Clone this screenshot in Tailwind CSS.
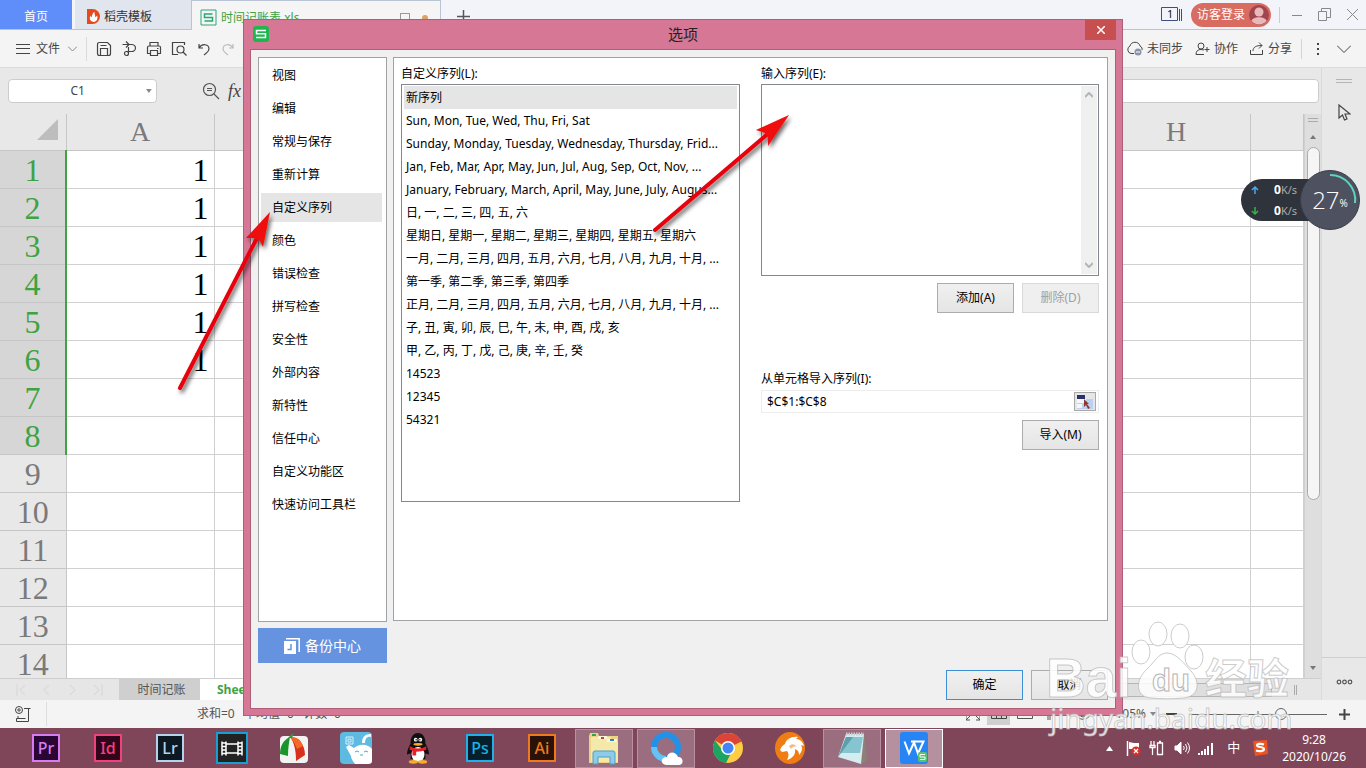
<!DOCTYPE html>
<html lang="zh-CN">
<head>
<meta charset="utf-8">
<title>选项</title>
<script src="https://cdn.jsdelivr.net/npm/@tailwindcss/browser@4"></script>
</head>
<body class="relative flex h-screen flex-col overflow-hidden bg-[#e8e8e8] font-['Noto_Sans','Noto_Sans_CJK_SC',sans-serif] text-xs text-[#444]">

<!-- Window tabs -->
<header class="flex h-[30px] shrink-0 items-stretch border-b border-[#b9c4d4] bg-[#f2f4f9]">
  <button class="w-[72px] bg-[#5f8dfa] pt-1 text-white">首页</button>
  <button class="ml-[3px] flex w-[116px] items-center gap-1 bg-[#e1e5ee] pl-3 pt-1 text-[#333]">
    <svg width="13" height="15" viewBox="0 0 14 16"><path d="M0 0h6a8 8 0 0 1 0 16H0z" fill="#e8481c"/><path d="M7 14c-4-1-5-4-3-7 0 2 1 2 1 2 0-3 2-5 3-6 0 3 1 4 1 6l2-2c1 4-1 7-4 7z" fill="#fff"/></svg>
    稻壳模板</button>
  <button class="-mb-px flex w-[250px] items-center gap-1 border border-b-0 border-[#b9c4d4] bg-[#f5f5f5] pl-2 pt-1 text-[#3fa243]">
    <svg width="17" height="17" viewBox="0 0 17 17" fill="none" stroke="#2aa775"><path d="M1 1h15v15H1z"/><path d="M12.500 5h-8v3.500h8V12h-8" stroke-width="1.500"/></svg>
    <span>时间记账表.xls</span>
    <span class="ml-auto size-[10px] border border-[#999]"></span><span class="mr-3 ml-2 size-[6px] rounded-full bg-[#e0a068]"></span>
  </button>
  <button class="ml-4 w-4 pt-1" aria-label="新建"><svg width="13" height="13" viewBox="0 0 13 13" stroke="#555" stroke-width="1.500"><path d="M6.500 0v13M0 6.500h13"/></svg></button>
  <div class="ml-auto flex items-center">
    <svg width="22" height="15" viewBox="0 0 22 15" fill="none" stroke="#3d4f7c"><path d="M.5.5h16v13H.5zM18.500 2v12M20.500 2v12"/><text x="6" y="11" font-size="11" fill="#111" stroke="none">1</text></svg>
    <button class="ml-2 flex h-6 w-20 items-center justify-between rounded-full bg-[#d96b61] pr-[2px] pl-[6px] text-white">访客登录
      <svg width="20" height="20" viewBox="0 0 20 20"><circle cx="10" cy="10" r="10" fill="#a04550"/><circle cx="10" cy="7" r="4.500" fill="#e9b9ba"/><path d="M2.500 16c1-5 14-5 15 0a10 10 0 0 1-15 0z" fill="#e9b9ba"/></svg></button>
    <span class="ml-2 h-4 w-px bg-[#ccc]"></span>
    <button class="ml-3" aria-label="最小化"><svg width="10" height="12" viewBox="0 0 10 12" stroke="#888"><path d="M0 6.500h10"/></svg></button>
    <button class="ml-4" aria-label="还原"><svg width="13" height="13" viewBox="0 0 13 13" fill="none" stroke="#888"><path d="M.5 3.500h8v9h-8zM3.500 3.500v-3h9v9h-4"/></svg></button>
    <button class="mr-2 ml-4" aria-label="关闭"><svg width="11" height="11" viewBox="0 0 11 11" stroke="#888"><path d="M0 0l11 11M11 0L0 11"/></svg></button>
  </div>
</header>

<!-- Quick access bar -->
<nav class="flex h-[38px] shrink-0 items-center border-b border-[#dcdcdc] bg-[#f4f4f4] pl-4">
  <button class="flex items-center gap-[6px]"><svg width="14" height="10" viewBox="0 0 14 10" stroke="#444"><path d="M0 .5h14M0 4.500h14M0 9.500h14"/></svg>文件<svg class="ml-[2px]" width="9" height="6" viewBox="0 0 9 6" fill="none" stroke="#888"><path d="M0 .5l4.500 4.500L9 .5"/></svg></button>
  <span class="ml-[9px] h-6 w-px bg-[#dadada]"></span>
  <div class="ml-[9px] flex items-center gap-[9px] text-[#444]">
    <button aria-label="保存"><svg width="16" height="16" viewBox="0 0 16 16" fill="none" stroke="currentColor" stroke-width="1.200"><path d="M1.500 3.500q0-2 2-2h8l3 3v8q0 2-2 2h-9q-2 0-2-2zM4.500 14V7.500h7V14M4.500 4.500h6"/></svg></button>
    <button aria-label="输出"><svg width="16" height="16" viewBox="0 0 16 16" fill="none" stroke="currentColor" stroke-width="1.200"><path d="M1.500 3.500h9a4 3.500 0 0 1 0 7H5M5 .5l3 3-3 3M7.500 6v6"/><circle cx="5.500" cy="12.500" r="2"/></svg></button>
    <button aria-label="打印"><svg width="16" height="16" viewBox="0 0 16 16" fill="none" stroke="currentColor" stroke-width="1.200"><path d="M4 5V1.500h8V5M4 12.500H1.500v-6q0-1.500 1.500-1.500h10q1.500 0 1.500 1.500v6H12M4.500 9.500h7v5h-7zM11 7.500h1.500"/></svg></button>
    <button aria-label="预览"><svg width="16" height="16" viewBox="0 0 16 16" fill="none" stroke="currentColor" stroke-width="1.200"><path d="M7 13.500H1.500v-12h12V4"/><circle cx="9.500" cy="8.500" r="3.500"/><path d="M12 11l3.500 3.500"/></svg></button>
    <button aria-label="撤销"><svg width="16" height="16" viewBox="0 0 16 16" fill="none" stroke="currentColor" stroke-width="1.200"><path d="M3 3v4h4M3 7c3-5 10-4 10 1 0 3-3 4-5 6"/></svg></button>
    <button aria-label="恢复" class="text-[#bbb]"><svg width="16" height="16" viewBox="0 0 16 16" fill="none" stroke="currentColor" stroke-width="1.200"><path d="M12 3v4H8M12 7C9 2 2 3 2 8c0 3 3 4 5 6"/></svg></button>
  </div>
  <div class="ml-auto flex items-center">
    <button class="flex items-center gap-1"><svg width="17" height="15" viewBox="0 0 17 15" fill="none" stroke="#444"><path d="M8 12.500H5a4 4 0 0 1-1-7.500c1-5 9-5 10 0 2 1 2.500 3 2 4"/><circle cx="12" cy="11" r="3.500" fill="#8a94a8" stroke="none"/><path d="M10 11h4" stroke="#fff"/></svg>未同步</button>
    <button class="ml-3 flex items-center gap-1"><svg width="15" height="14" viewBox="0 0 15 14" fill="none" stroke="#444"><circle cx="6" cy="4" r="3"/><path d="M9 12.500H1q0-5 5-5l3 .5M12 5v5M9.500 7.500h5"/></svg>协作</button>
    <button class="ml-[11px] flex items-center gap-1"><svg width="15" height="14" viewBox="0 0 15 14" fill="none" stroke="#444"><path d="M1.500 8v4.500h12V8M4 9c0-4 3-5.500 9-5.500M10 .5l3 3-3 3"/></svg>分享</button>
    <span class="ml-[9px] h-5 w-px bg-[#d5d5d5]"></span>
    <button class="ml-[15px]" aria-label="更多"><svg width="3" height="14" viewBox="0 0 3 14" fill="#444"><path d="M0 1h2v2H0zM0 6h2v2H0zM0 11h2v2H0z"/></svg></button>
    <button class="mr-[15px] ml-[17px]" aria-label="折叠"><svg width="14" height="8" viewBox="0 0 14 8" fill="none" stroke="#444"><path d="M0 .5l7 7 7-7"/></svg></button>
  </div>
</nav>

<main class="flex min-h-0 flex-1">
  <section class="flex min-w-0 flex-1 flex-col">
    <div class="flex h-[46px] shrink-0 items-center pr-[2px] pl-2">
      <div class="flex h-6 w-[149px] items-center rounded-sm border border-[#ccc] bg-white pr-1">
        <input aria-label="名称框" value="C1" class="w-full min-w-0 text-center text-xs text-[#444]">
        <svg width="6" height="4" viewBox="0 0 6 4" fill="#888"><path d="M0 0h6L3 4z"/></svg>
      </div>
      <svg class="ml-[45px]" width="18" height="18" viewBox="0 0 18 18" fill="none" stroke="#555" stroke-width="1.200"><circle cx="7.500" cy="7.500" r="6"/><path d="M12 12l5 5M5 6.500h5M5 8.500h5"/></svg>
      <span class="ml-2 font-['Liberation_Serif',serif] text-lg italic">fx</span>
      <input aria-label="编辑栏" class="ml-2 h-6 min-w-0 flex-1 rounded-sm border border-[#ccc] bg-white px-1">
    </div>
    <div class="flex min-h-0 flex-1">
      <div class="min-w-0 flex-1 overflow-hidden bg-white">
        <table class="w-full table-fixed border-collapse font-['Liberation_Serif',serif] text-[32px] leading-8 text-[#7a7a7a]">
          <colgroup><col class="w-[66px]"><col class="w-[148px]"><col class="w-[148px]"><col class="w-[148px]"><col class="w-[148px]"><col class="w-[148px]"><col class="w-[148px]"><col class="w-[148px]"><col class="w-[148px]"><col></colgroup>
          <thead><tr class="h-[36px] bg-[#e8e8e8] text-[28px] *:border-r *:border-b *:border-[#c6c6c6] *:p-0 *:font-normal">
            <th><svg class="mb-1 ml-auto mr-2 block" width="21" height="21" viewBox="0 0 21 21"><path d="M21 0v21H0z" fill="#bdbdbd"/></svg></th><th>A</th><th></th><th></th><th></th><th></th><th></th><th></th><th>H</th><th></th></tr></thead>
          <tbody id="rows"></tbody>
        </table>
      </div>
      <div class="flex w-[17px] shrink-0 flex-col items-center border-l border-[#d0d0d0] bg-[#dedede]">
        <span class="mt-1 h-1 w-[10px] border-y border-[#aaa]"></span>
        <svg class="mt-[13px]" width="6" height="4" viewBox="0 0 6 4" fill="#777"><path d="M3 0l3 4H0z"/></svg>
        <span class="mt-2 h-[353px] w-[13px] rounded-full border border-[#aaa] bg-[#f5f5f5]"></span>
        <svg class="mt-auto mb-2" width="6" height="4" viewBox="0 0 6 4" fill="#777"><path d="M3 4l3-4H0z"/></svg>
      </div>
    </div>
    <div class="flex h-[22px] shrink-0 items-center border-t border-[#cfcfcf] bg-[#e6e6e6]">
      <svg class="ml-4" width="87" height="12" viewBox="0 0 87 12" fill="none" stroke="#dcdcdc" stroke-width="1.500"><path d="M1 0v12M9 1L4 6l5 5M33 1l-5 5 5 5M54 1l5 5-5 5M78 1l5 5-5 5M86 0v12"/></svg>
      <button class="ml-4 h-full w-[81px] bg-[#cfcfcf] pl-1 text-[#555]">时间记账</button>
      <button class="h-full w-20 bg-white text-left pl-[17px] font-['Open_Sans','Noto_Sans',sans-serif] font-bold text-[#3fa243]">Sheet1</button>
      <span class="mr-[22px] ml-auto h-[14px] w-[400px] border border-[#b5b5b5] bg-[#dedede]"></span>
      <span class="mr-6 h-[10px] w-[3px] border-x border-[#aaa]"></span>
    </div>
  </section>
  <aside class="flex w-[45px] shrink-0 flex-col items-center border-l border-[#dadada] bg-[#e8e8e8]">
    <span class="mt-[11px] h-1 w-4 border-y border-[#b5b5b5]"></span>
    <svg class="mt-[21px]" width="13" height="17" viewBox="0 0 13 17" fill="none" stroke="#444" stroke-width="1.200"><path d="M1 1v13l3.500-3 2 5 2.500-1-2-5H12z"/></svg>
    <span class="mt-auto h-px w-full bg-[#cfcfcf]"></span>
    <svg class="mt-[21px] mb-[15px]" width="17" height="6" viewBox="0 0 17 6" fill="none" stroke="#555" stroke-width="1.200"><circle cx="3" cy="3" r="1.800"/><circle cx="8.500" cy="3" r="1.800"/><circle cx="14" cy="3" r="1.800"/></svg>
  </aside>
</main>

<!-- Status bar -->
<footer class="flex h-7 shrink-0 items-center bg-[#f4f4f4] pl-[15px]">
  <svg width="16" height="16" viewBox="0 0 16 16" fill="none" stroke="#444"><circle cx="4" cy="4" r="3.500"/><circle cx="4" cy="4" r="1.200"/><path d="M9 2.500h6.500M13.500 2.500v13h-12v-3h9M3 10v2"/></svg>
  <span class="ml-[15px] h-6 w-px bg-[#ddd]"></span>
  <span class="ml-[150px] whitespace-pre text-[#555]">求和=0   平均值=0   计数=0</span>
  <div class="ml-auto flex items-center text-[#555]">
    <svg width="14" height="14" viewBox="0 0 14 14" fill="none" stroke="#555"><path d="M0 9v4h4M0 13l5-5M14 9v4h-4M14 13L9 8M0 4V0h4M0 0l5 5M14 4V0h-4M14 0L9 5"/></svg>
    <span class="ml-[7px] flex h-[22px] w-[23px] items-center justify-center bg-[#cfcfcf]"><svg width="16" height="12" viewBox="0 0 16 12" fill="none" stroke="#444"><path d="M.5.5h15v10H.5zM0 5.500h16M5.500 0v11M10.500 0v11"/></svg></span>
    <svg class="ml-[7px]" width="16" height="12" viewBox="0 0 16 12" fill="none" stroke="#555"><path d="M.5.5h15v10H.5z"/></svg>
    <svg class="ml-[10px]" width="14" height="14" viewBox="0 0 14 14" fill="none" stroke="#555"><path d="M1 3.500h12v5H1zM7 0v13M5 8v5"/></svg>
    <svg class="ml-[18px]" width="16" height="14" viewBox="0 0 16 14" fill="none" stroke="#555"><path d="M0 7c4-7 12-7 16 0-4 7-12 7-16 0z"/><circle cx="8" cy="7" r="3"/></svg>
    <span class="ml-6">105%</span>
    <svg class="ml-1" width="6" height="4" viewBox="0 0 6 4" fill="#888"><path d="M0 0h6L3 4z"/></svg>
    <svg class="ml-[10px]" width="11" height="12" viewBox="0 0 11 12" stroke="#444" stroke-width="2"><path d="M0 6h11"/></svg>
    <svg class="ml-[12px]" width="138" height="14" viewBox="0 0 138 14" fill="#f4f4f4" stroke="#666"><path d="M0 7.500h138M69 4v6"/><circle cx="92" cy="7" r="5.500"/></svg>
    <svg class="mr-4 ml-3" width="11" height="11" viewBox="0 0 11 11" stroke="#444" stroke-width="2"><path d="M5.500 0v11M0 5.500h11"/></svg>
  </div>
</footer>

<!-- Taskbar -->
<nav class="flex h-10 shrink-0 items-center bg-[#7f4558] pl-[17px]">
  <div class="flex gap-1 *:flex *:h-[39px] *:w-[58px] *:items-center *:justify-center">
    <button><span class="flex size-7 items-center justify-center border-2 border-[#d77bf0] bg-[#2a0634] text-base leading-none font-medium text-[#d77bf0]">Pr</span></button>
    <button><span class="flex size-7 items-center justify-center border-2 border-[#f0417f] bg-[#30051c] text-base leading-none font-medium text-[#f0417f]">Id</span></button>
    <button><span class="flex size-7 items-center justify-center border-2 border-[#b4d2ea] bg-[#0c1822] text-base leading-none font-medium text-[#b4d2ea]">Lr</span></button>
    <button aria-label="视频"><svg width="32" height="32" viewBox="0 0 32 32"><path d="M1 1h30v30H1z" fill="#222" stroke="#17a0cf" stroke-width="2"/><path d="M6 9.500v14M10 9.500v14M22 9.500v14M26 9.500v14" stroke="#fff" stroke-width="1.500"/><path d="M6 11h4M6 14.500h4M6 18h4M6 21.500h4M22 11h4M22 14.500h4M22 18h4M22 21.500h4M10 12h12M10 21h12" stroke="#fff" stroke-width="1.500"/></svg></button>
    <button aria-label="录屏"><svg width="32" height="32" viewBox="0 0 32 32"><rect x="2" y="4" width="28" height="27" rx="4" fill="#f3f3f3"/><path d="M12 5C5 8 2 15 2 22l8 2c0-8 1-14 2-19z" fill="#19952a"/><path d="M12 5c8 0 15 7 15 18l-9 6C18 18 16 10 12 5z" fill="#d9301c"/><path d="M12 5c8 0 11 3 13 9l-6 3c-2-5-4-9-7-12z" fill="#f36a28"/><path d="M10 6q3-4 6-5l-2 5z" fill="#2d9c35"/></svg></button>
    <button aria-label="助手"><svg width="32" height="32" viewBox="0 0 32 32"><rect width="32" height="32" rx="4" fill="#5dbbe2"/><path d="M6 15l3-2 5 3c4-4 13-5 18 1v12q0 3-4 3H15c-2-3-4-5-4-8z" fill="#fff"/><path d="M22 11c0-6 3-9 9-9v3c-4-1-6 2-6 6z" fill="#fff"/><path d="M15 20q2-2 4 0M24 20q2-2 4 0M20 23h3" stroke="#4aa6ce" fill="none"/><path d="M6 5h7v7H6zM8 7h3v3H8z" fill="none" stroke="#d8f1fb"/></svg></button>
    <button aria-label="QQ"><svg width="24" height="32" viewBox="0 0 26 34"><path d="M5 12C4-3 22-3 21 12c2 3 4 8 4 12l-4-1v6H5v-6l-4 1c0-4 2-9 4-12z" fill="#111"/><ellipse cx="13" cy="24" rx="7" ry="8" fill="#fff"/><circle cx="10.500" cy="8" r="2" fill="#fff"/><circle cx="15.500" cy="8" r="2" fill="#fff"/><circle cx="11" cy="8" r=".8"/><circle cx="15" cy="8" r=".8"/><ellipse cx="13" cy="13" rx="5" ry="1.500" fill="#f6ad2b"/><path d="M4 15q9 5 18 0v4q-5 2-11 2v4H7v-5l-3-1z" fill="#e4202c"/><ellipse cx="8" cy="32" rx="5" ry="2" fill="#f6ad2b"/><ellipse cx="18" cy="32" rx="5" ry="2" fill="#f6ad2b"/></svg></button>
    <button><span class="flex size-7 items-center justify-center border-2 border-[#1fb0e8] bg-[#05202c] text-base leading-none font-medium text-[#1fb0e8]">Ps</span></button>
    <button><span class="flex size-7 items-center justify-center border-2 border-[#ef7a1c] bg-[#2a1306] text-base leading-none font-medium text-[#ef7a1c]">Ai</span></button>
    <button class="border border-[#b990a0] bg-[#9a6e7e]" aria-label="资源管理器"><svg width="32" height="34" viewBox="0 0 32 34"><path d="M1 5l1-3h8l1 3h19v27H1z" fill="#e9d583"/><path d="M3 6h20v5h7v20H3z" fill="#f4e9a9"/><path d="M10 5h9v3h-9zM19 8h10v3H19z" fill="#fbf7d8"/><path d="M4 3h4v2H4z" fill="#2ba84a"/><path d="M13 6h3v2h-3z" fill="#d0422c"/><path d="M22 8h4v2h-4z" fill="#2c83d0"/><path d="M5 33V22q0-2 2-2h18q2 0 2 2v11h-5v-7H10v7z" fill="#8ccbe9" stroke="#4f9ec7"/></svg></button>
    <button class="border border-[#b990a0] bg-[#9a6e7e]" aria-label="QQ浏览器"><svg width="34" height="34" viewBox="0 0 34 34"><circle cx="17" cy="16" r="12" fill="none" stroke="#2491e8" stroke-width="6"/><path d="M5 16a12 12 0 0 0 12 12" fill="none" stroke="#65c2f4" stroke-width="6"/><path d="M18 34c-7 0-7-8 0-8 1-6 9-6 11 0 6 0 6 8 1 8z" fill="#fff"/></svg></button>
    <button aria-label="Chrome"><svg width="30" height="34" viewBox="0 0 30 34"><circle cx="15" cy="17" r="15" fill="#fc4"/><path d="M15 17L2 9.500a15 15 0 0 1 26.500 1z" fill="#db4437"/><path d="M2 9.500A15 15 0 0 0 13 32l6-12-9 0z" fill="#1da462"/><circle cx="15" cy="17" r="7" fill="#fff"/><circle cx="15" cy="17" r="5.500" fill="#4285f4"/></svg></button>
    <button aria-label="UC浏览器"><svg width="30" height="34" viewBox="0 0 30 34"><ellipse cx="15" cy="17" rx="15" ry="16" fill="#f07d14"/><path d="M5 19c1-3 3-5 5-6 1-5 7-8 13-7l-2 2c4 0 7 3 8 7l-3-1c2 3 1 7-2 10 0-3-1-5-4-6 1 5-2 9-8 11 2-4 2-7 0-9l-5 1z" fill="#fff"/><path d="M14 15c3-3 6-2 8 1-3-1-5 0-6 2z" fill="#f7b981"/></svg></button>
    <button class="border border-[#b990a0] bg-[#9a6e7e]" aria-label="记事本"><svg width="32" height="34" viewBox="0 0 32 34"><path d="M10 3h18l3 26-5 4z" fill="#8b8275"/><path d="M10 3h18l-3 30L2 26z" fill="#d5edf0"/><path d="M10 6h17l-3 16H4z" fill="#86c4cf"/><path d="M2 26l15-20h-7z" fill="#5c9eab"/><path d="M10 3h18" stroke="#ccc" stroke-width="3" stroke-dasharray="1.500 1"/></svg></button>
    <button class="border border-white bg-[#b591a0]" aria-label="WPS"><svg width="28" height="34" viewBox="0 0 28 34"><rect y="1" width="28" height="32" rx="3" fill="#2684f4"/><path d="M4.500 10.500l4.500 12 5-11 4 11 5.500-12H11" fill="none" stroke="#fff" stroke-width="2"/><rect x="18" y="21" width="9" height="10" rx="2" fill="#57c271"/><path d="M25 23.500h-5V26h5v2.500h-5" fill="none" stroke="#fff"/></svg></button>
  </div>
  <div class="ml-auto flex items-center text-white">
    <svg width="7" height="5" viewBox="0 0 7 5" fill="#fff"><path d="M3.500 0L7 5H0z"/></svg>
    <svg class="ml-[13px]" width="15" height="16" viewBox="0 0 15 16"><path d="M1.500 1v15" stroke="#fff" stroke-width="1.500"/><path d="M3 2l5 1 5 0v6H3z" fill="#fff"/><circle cx="10" cy="11" r="4.500" fill="#d6302a"/><path d="M8 9l4 4M12 9l-4 4" stroke="#fff" stroke-width="1.300"/></svg>
    <svg class="ml-2" width="16" height="16" viewBox="0 0 16 16" fill="none" stroke="#fff" stroke-width="1.300"><path d="M2 1v4M5 1v4M1 5.500h5v2H1zM3.500 8v7M8.500 3h5v11.500h-5zM10 1.500h2"/></svg>
    <svg class="ml-[9px]" width="16" height="14" viewBox="0 0 16 14" fill="none" stroke="#fff"><path d="M1 5h2l4-4v12L3 9H1z" fill="#fff"/><path d="M9.500 5q1.500 2 0 4M11.500 3q3 4 0 8M13.500 1.500q4 5.500 0 11"/></svg>
    <svg class="ml-2" width="16" height="13" viewBox="0 0 16 13" fill="#fff"><path d="M0 11h2v2H0zM3 9h2v4H3zM6 7h2v6H6zM9 4h2v9H9zM13 1h2v12h-2z"/></svg>
    <span class="ml-[13px] text-[13px]">中</span>
    <svg class="ml-[12px]" width="16" height="16" viewBox="0 0 16 16"><path d="M1 1l14-1 1 14-13 2z" fill="#ee5420"/><path d="M12 4.500c-3-1-7-1-7 1s7 1 7 3.500-5 2.500-8 1.500" fill="none" stroke="#fff" stroke-width="2.200"/></svg>
    <div class="mr-[20px] ml-[14px] text-center text-xs leading-[17px]">9:28<br>2020/10/26</div>
  </div>
</nav>

<!-- Options dialog -->
<div role="dialog" aria-labelledby="dlg-title" class="absolute top-[19px] left-1/2 flex w-[880px] -translate-x-1/2 flex-col border border-[#ad5f7a] bg-[#d67795] px-[6px] pb-[6px] text-black">
  <div class="flex h-[29px] items-start">
    <svg class="mt-[6px] ml-[3px]" width="16" height="16" viewBox="0 0 16 16"><rect width="16" height="16" rx="3" fill="#1fb650"/><path d="M13 4.500H3.500v3.300h9v3.700H3" fill="none" stroke="#fff" stroke-width="1.500"/></svg>
    <h1 id="dlg-title" class="mt-1 flex-1 pl-3 text-center text-[15px] leading-5 text-[#222]">选项</h1>
    <button aria-label="关闭" class="flex h-5 w-[31px] items-center justify-center bg-[#c74f50]"><svg width="8" height="8" viewBox="0 0 8 8" stroke="#fff" stroke-width="1.500"><path d="M0 0l8 8M8 0L0 8"/></svg></button>
  </div>
  <div class="flex h-[660px] flex-col border border-[#ad5f7a] bg-[#f0f0f0] px-[7px] pt-[7px]">
    <div class="flex items-start gap-[6px]">
      <div class="w-[129px] shrink-0">
        <ul class="flex h-[565px] flex-col gap-1 border border-[#a0a3a6] bg-white pt-[3px] pr-1 pl-[2px] *:h-[29px]">
          <li><button class="size-full pl-[11px] text-left">视图</button></li>
          <li><button class="size-full pl-[11px] text-left">编辑</button></li>
          <li><button class="size-full pl-[11px] text-left">常规与保存</button></li>
          <li><button class="size-full pl-[11px] text-left">重新计算</button></li>
          <li><button class="size-full bg-[#e5e5e5] pl-[11px] text-left">自定义序列</button></li>
          <li><button class="size-full pl-[11px] text-left">颜色</button></li>
          <li><button class="size-full pl-[11px] text-left">错误检查</button></li>
          <li><button class="size-full pl-[11px] text-left">拼写检查</button></li>
          <li><button class="size-full pl-[11px] text-left">安全性</button></li>
          <li><button class="size-full pl-[11px] text-left">外部内容</button></li>
          <li><button class="size-full pl-[11px] text-left">新特性</button></li>
          <li><button class="size-full pl-[11px] text-left">信任中心</button></li>
          <li><button class="size-full pl-[11px] text-left">自定义功能区</button></li>
          <li><button class="size-full pl-[11px] text-left">快速访问工具栏</button></li>
        </ul>
        <button class="mt-[6px] flex h-[35px] w-full items-center justify-center gap-[5px] bg-[#6593e0] text-sm text-white"><svg width="16" height="16" viewBox="0 0 16 16"><path d="M0 3h12v13H0z" fill="#fff"/><path d="M2 .8h13.200V14" fill="none" stroke="#fff" stroke-width="1.500"/><path d="M7 6v5.500H3.500" fill="none" stroke="#6593e0" stroke-width="1.500"/></svg>备份中心</button>
      </div>
      <div class="flex h-[564px] flex-1 items-start gap-[21px] border border-[#a0a3a6] bg-white pt-[6px] pr-2 pl-[7px]">
        <div class="w-[339px] shrink-0">
          <p id="list-label" class="h-5 leading-5">自定义序列(L):</p>
          <ul aria-labelledby="list-label" class="h-[418px] border border-[#828790] px-[2px] pt-px *:h-[23px] *:whitespace-nowrap">
            <li><button class="size-full bg-[#e5e5e5] pl-[2px] text-left">新序列</button></li>
            <li><button class="size-full pl-[2px] text-left">Sun, Mon, Tue, Wed, Thu, Fri, Sat</button></li>
            <li><button class="size-full pl-[2px] text-left">Sunday, Monday, Tuesday, Wednesday, Thursday, Frid...</button></li>
            <li><button class="size-full pl-[2px] text-left">Jan, Feb, Mar, Apr, May, Jun, Jul, Aug, Sep, Oct, Nov, ...</button></li>
            <li><button class="size-full pl-[2px] text-left">January, February, March, April, May, June, July, Augus...</button></li>
            <li><button class="size-full pl-[2px] text-left">日, 一, 二, 三, 四, 五, 六</button></li>
            <li><button class="size-full pl-[2px] text-left">星期日, 星期一, 星期二, 星期三, 星期四, 星期五, 星期六</button></li>
            <li><button class="size-full pl-[2px] text-left">一月, 二月, 三月, 四月, 五月, 六月, 七月, 八月, 九月, 十月, ...</button></li>
            <li><button class="size-full pl-[2px] text-left">第一季, 第二季, 第三季, 第四季</button></li>
            <li><button class="size-full pl-[2px] text-left">正月, 二月, 三月, 四月, 五月, 六月, 七月, 八月, 九月, 十月, ...</button></li>
            <li><button class="size-full pl-[2px] text-left">子, 丑, 寅, 卯, 辰, 巳, 午, 未, 申, 酉, 戌, 亥</button></li>
            <li><button class="size-full pl-[2px] text-left">甲, 乙, 丙, 丁, 戊, 己, 庚, 辛, 壬, 癸</button></li>
            <li><button class="size-full pl-[2px] text-left">14523</button></li>
            <li><button class="size-full pl-[2px] text-left">12345</button></li>
            <li><button class="size-full pl-[2px] text-left">54321</button></li>
          </ul>
        </div>
        <div class="min-w-0 flex-1">
          <label for="entry" class="block h-5 leading-5">输入序列(E):</label>
          <div class="flex h-48 border border-[#828790] p-px">
            <textarea id="entry" class="min-w-0 flex-1 resize-none overflow-hidden p-1 outline-none"></textarea>
            <div class="flex w-4 flex-col items-center justify-between bg-[#f0f0f0] py-[6px]">
              <svg width="8" height="6" viewBox="0 0 8 6" fill="none" stroke="#b5b5b5" stroke-width="2"><path d="M0 5l4-4 4 4"/></svg>
              <svg width="8" height="6" viewBox="0 0 8 6" fill="none" stroke="#b5b5b5" stroke-width="2"><path d="M0 1l4 4 4-4"/></svg>
            </div>
          </div>
          <div class="mt-[7px] flex justify-end gap-2 *:h-[30px] *:w-[77px] *:border">
            <button class="border-[#acacac] bg-linear-to-b from-[#f0f0f0] to-[#e5e5e5]">添加(A)</button>
            <button disabled class="border-[#d9d9d9] bg-[#efefef] text-[#a0a0a0]">删除(D)</button>
          </div>
          <label for="range" class="mt-[56px] block h-5 leading-5">从单元格导入序列(I):</label>
          <div class="mt-px flex h-[23px] items-center border border-[#ededed] pr-[2px] pl-[5px]">
            <input id="range" value="$C$1:$C$8" class="min-w-0 flex-1">
            <button aria-label="选择区域" class="flex h-[19px] w-[22px] items-center justify-center border border-[#a8a8a8] bg-[#e6e6e6]"><svg width="16" height="14" viewBox="0 0 16 14"><path d="M0 4h16v10H0z" fill="#bcd0f2"/><path d="M0 4h9v4H0zM0 9h5v4H0z" fill="#f4f7ff"/><path d="M0 0h8v4H0z" fill="#2b2f6b"/><path d="M7 4l5 5h-2l3 4-2 1-2-4-2 2z" fill="#8a3a30"/></svg></button>
          </div>
          <div class="mt-[7px] flex justify-end"><button class="h-[30px] w-[77px] border border-[#acacac] bg-linear-to-b from-[#f0f0f0] to-[#e5e5e5]">导入(M)</button></div>
        </div>
      </div>
    </div>
    <div class="mt-[7px] flex justify-end gap-2 *:h-[30px] *:w-[77px] *:border">
      <button class="border-[#3c8fd5] bg-linear-to-b from-[#f0f0f0] to-[#e5e5e5]">确定</button>
      <button class="border-[#acacac] bg-linear-to-b from-[#f0f0f0] to-[#e5e5e5]">取消</button>
    </div>
  </div>
</div>

<!-- Network speed widget -->
<div class="absolute top-[170px] right-[6px] flex h-[60px] items-center text-white">
  <div class="-mr-7 flex h-[42px] w-[87px] flex-col justify-around rounded-full bg-[#2f333c] pl-[10px] text-[11px] leading-5 text-[#aaa]">
    <div class="flex items-center"><svg class="mr-[15px]" width="8" height="8" viewBox="0 0 8 8" fill="none" stroke="#4aa8f0" stroke-width="1.500"><path d="M4 8V1M1 4l3-3 3 3"/></svg><b class="text-xs text-white">0</b>K/s</div>
    <div class="flex items-center"><svg class="mr-[15px]" width="8" height="8" viewBox="0 0 8 8" fill="none" stroke="#37b24a" stroke-width="1.500"><path d="M4 0v7M1 4l3 3 3-3"/></svg><b class="text-xs text-white">0</b>K/s</div>
  </div>
  <div class="relative flex size-[60px] items-center justify-center rounded-full border border-[#3a3e4a] bg-[#4d5160] font-['Open_Sans','Noto_Sans',sans-serif] text-2xl font-light">27<span class="mt-2 text-[10px] font-normal">%</span>
    <svg class="absolute inset-0" width="58" height="58" viewBox="0 0 58 58" fill="none" stroke="#5fd3bd" stroke-width="2"><path d="M29 4a25 25 0 0 1 25 28"/></svg>
  </div>
</div>

<!-- Annotation arrows and site watermark -->
<svg class="pointer-events-none absolute top-0 left-0" width="1366" height="768" viewBox="0 0 1366 768">
  <defs><filter id="sh" x="-20%" y="-20%" width="150%" height="150%"><feDropShadow dx="2" dy="3" stdDeviation="2" flood-opacity=".6"/></filter></defs>
  <g fill="#f00a0a" stroke-linecap="round" filter="url(#sh)">
    <path d="M180 388L258 236" stroke="#e8050a" stroke-width="4"/><path d="M270 212L246 238L254 238L260 241L263 247z"/>
    <path d="M655 230L770 132" stroke="#e8050a" stroke-width="4"/><path d="M789 115L756 130L765 133L768 137L768 146z"/>
  </g>
  <g fill="#fff" fill-opacity=".85" stroke="#b5b5b5" stroke-opacity=".7" stroke-width="1" font-weight="bold">
    <text x="1046" y="697" font-family="Liberation Sans" font-size="55">Bai</text>
    <ellipse cx="1141" cy="652" rx="9" ry="12"/><ellipse cx="1158" cy="634" rx="9" ry="12"/><ellipse cx="1180" cy="636" rx="9" ry="12"/><ellipse cx="1194" cy="657" rx="9" ry="12"/>
    <path d="M1167 653c-9 0-13 10-20 16-12 11-12 28 4 29 9 1 22 1 32 0 16-1 18-16 8-27-7-7-14-18-24-18z"/>
    <text x="1152" y="691" font-family="Liberation Sans" font-size="31" stroke-opacity="1">du</text>
    <text x="1205" y="694" font-family="Noto Sans CJK SC" font-size="42">经验</text>
    <text x="1050" y="729" font-family="Noto Sans" font-size="28" font-weight="normal">jingyan.baidu.com</text>
  </g>
</svg>

<script>
  const tbody = document.getElementById('rows');
  for (let n = 1; n <= 14; n++) {
    const tr = document.createElement('tr');
    const head = n <= 8
      ? 'h-[38px] border-b border-[#c6c6c6] border-r-2 border-r-[#3fa243] bg-[#d6d6d6] p-0 pt-[2px] font-normal text-[#3fa243]'
      : 'h-[38px] border-b border-r border-[#c6c6c6] bg-[#e8e8e8] p-0 pt-[2px] font-normal';
    let html = `<th class="${head}">${n}</th>`;
    for (let c = 0; c < 9; c++) {
      html += `<td class="border-r border-b border-[#d0d0d0] pt-[2px] pr-[5px] pb-0 pl-0 text-right text-black">${c === 0 && n <= 6 ? '1' : ''}</td>`;
    }
    tr.innerHTML = html;
    tbody.append(tr);
  }
</script>
</body>
</html>
